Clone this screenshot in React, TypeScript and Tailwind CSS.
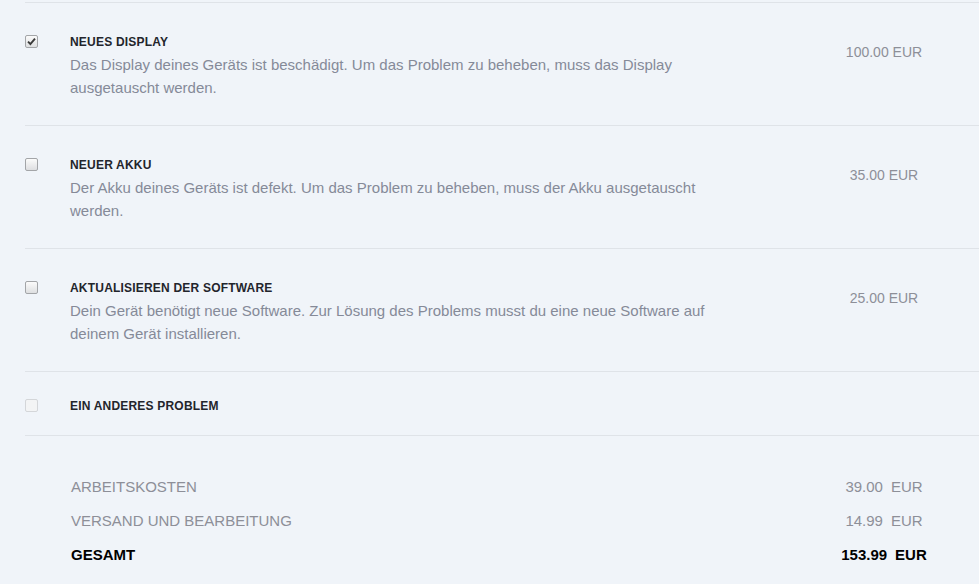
import React from 'react'

type Repair = {
  title: string
  text?: string
  price?: string
  checked?: boolean
  disabled?: boolean
}

const repairs: Repair[] = [
  {
    title: 'NEUES DISPLAY',
    text: 'Das Display deines Geräts ist beschädigt. Um das Problem zu beheben, muss das Display ausgetauscht werden.',
    price: '100.00 EUR',
    checked: true,
  },
  {
    title: 'NEUER AKKU',
    text: 'Der Akku deines Geräts ist defekt. Um das Problem zu beheben, muss der Akku ausgetauscht werden.',
    price: '35.00 EUR',
  },
  {
    title: 'AKTUALISIEREN DER SOFTWARE',
    text: 'Dein Gerät benötigt neue Software. Zur Lösung des Problems musst du eine neue Software auf deinem Gerät installieren.',
    price: '25.00 EUR',
  },
]

const Checkbox = ({ checked, disabled }: { checked?: boolean; disabled?: boolean }) => (
  <span
    className={
      'flex h-[13px] w-[13px] items-center justify-center rounded-[2px] border ' +
      (disabled
        ? 'border-[#d4d6d9] bg-[#f3f4f5]'
        : 'border-[#a3a5a8] bg-gradient-to-b from-[#fbfbfb] to-[#dedfe1]')
    }
  >
    {checked && (
      <svg width="9" height="9" viewBox="0 0 9 9">
        <path d="M1 4.6 L3.4 7 L8 1.6" fill="none" stroke="#3a3a3a" strokeWidth="1.9" />
      </svg>
    )}
  </span>
)

const Amount = ({ value, bold }: { value: string; bold?: boolean }) => (
  <div className="mr-[25px] flex w-[140px] justify-center">
    <span className={'flex gap-[8px] ' + (bold ? 'font-bold text-black' : 'text-[#8d8f98]')}>
      <span>{value}</span>
      <span>EUR</span>
    </span>
  </div>
)

export default function App() {
  return (
    <div className="min-h-[584px] w-[979px] bg-[#f0f4f9] pl-[25px] pt-[2px] font-['Liberation_Sans',Arial,sans-serif]">
      {repairs.map((r) => (
        <div key={r.title} className="flex border-t border-[#dfe3e8] pb-[26px] pt-[31px]">
          <div className="w-[45px] pt-[1px]">
            <Checkbox checked={r.checked} />
          </div>
          <div className="flex-1">
            <div className="mb-[3px] text-[12px] font-bold leading-[16px] tracking-[0.2px] text-[#23252c]">{r.title}</div>
            <p className="max-w-[650px] text-[15px] leading-[23px] text-[#858a98]">{r.text}</p>
          </div>
          <div className="mr-[25px] mt-[8px] w-[140px] text-center text-[14px] leading-[20px] text-[#8d8f98]">
            {r.price}
          </div>
        </div>
      ))}

      <div className="flex border-y border-[#dfe3e8] pb-[21px] pt-[26px]">
        <div className="w-[45px] pt-[1px]">
          <Checkbox disabled />
        </div>
        <div className="text-[12px] font-bold leading-[16px] tracking-[0.2px] text-[#23252c]">EIN ANDERES PROBLEM</div>
      </div>

      <div className="pt-[34px] text-[15px]">
        <div className="flex h-[34px] items-center">
          <div className="flex-1 pl-[46px] text-[#8d8f98]">ARBEITSKOSTEN</div>
          <Amount value="39.00" />
        </div>
        <div className="flex h-[34px] items-center">
          <div className="flex-1 pl-[46px] text-[#8d8f98]">VERSAND UND BEARBEITUNG</div>
          <Amount value="14.99" />
        </div>
        <div className="flex h-[34px] items-center">
          <div className="flex-1 pl-[46px] font-bold text-black">GESAMT</div>
          <Amount value="153.99" bold />
        </div>
      </div>
    </div>
  )
}
